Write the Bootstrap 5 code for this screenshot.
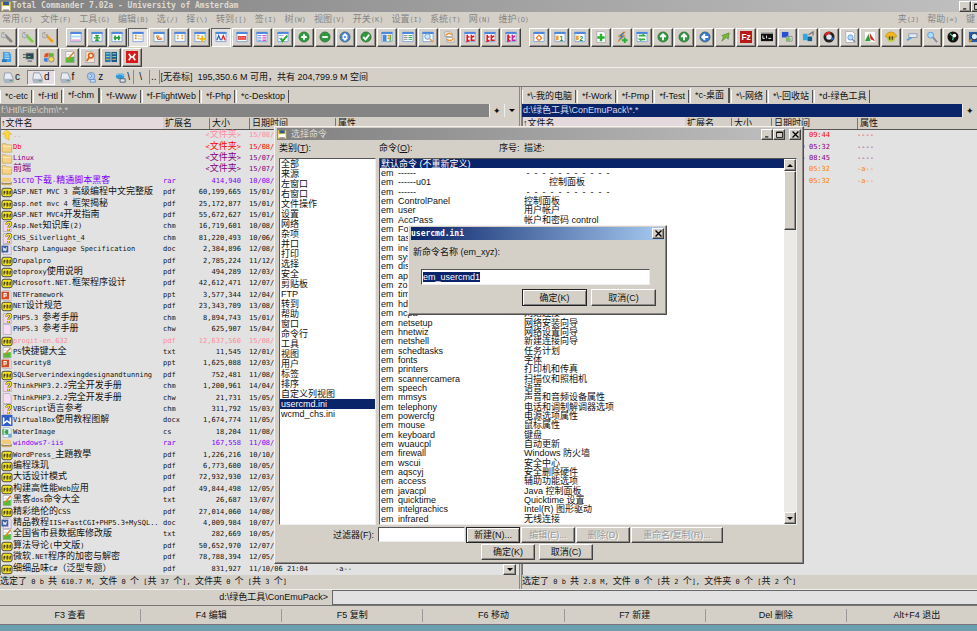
<!DOCTYPE html>
<html lang="zh-CN">
<head>
<meta charset="utf-8">
<meta name="viewport" content="width=device-width, initial-scale=1">
<title>Total Commander 7.02a - University of Amsterdam</title>
<link href="https://cdn.jsdelivr.net/npm/bootstrap@5.3.0/dist/css/bootstrap.min.css" rel="stylesheet">
<style>
:root{--face:#d4d0c8;--navy:#0a246a;--ui:"Liberation Sans","Noto Sans CJK SC",sans-serif;--fixed:"DejaVu Sans Mono","Noto Sans CJK SC",monospace}
body{background:#6b9fb0;font:9px/12px var(--ui);color:#111;overflow:hidden}
button,input{font:inherit;color:inherit}
svg{display:block}
.app{height:calc(100vh - 6px);background:var(--face);border-bottom:1px solid #777}
.fixed-text{font-family:var(--fixed);font-size:7px}
.han{font-size:9px}
.title-main{height:12px;background:linear-gradient(90deg,#808080,#c0c0c0);color:#dedad2;font:bold 8px/12px var(--fixed)}
.title-btns{flex:none;margin-right:-6px}
.menu-bar{height:15px;padding:0 2px;gap:8px;color:#858585;line-height:15px}
.menu-bar a{color:inherit;text-decoration:none}
.tool-clip{height:20px;overflow:hidden}
.tool-row{height:20px;margin:0 -8px 0 -3px}
.tool-row.short-row{width:146px}
.tool-gap{flex:0 0 7px}
.bevel{background:var(--face);border:1px solid;border-color:#fff #404040 #404040 #fff;box-shadow:inset -1px -1px #908d88;padding:0;border-radius:0}
.tool{flex:1 1 0;min-width:0;height:19px;margin-right:1px;display:flex;align-items:center;justify-content:center}
.tool.pressed{border-color:#606060 #fff #fff #606060;box-shadow:none;background:#e6e2e0}
.tool svg{width:12px;height:12px}
.drive-bar{height:20px;border-top:1px solid #f0eeea;border-bottom:1px solid #777;padding:0 2px}
.drive{height:15px;border:1px solid transparent;background:none;padding:0 2px 0 0;font-size:10px;gap:1px}
.drive svg{width:11px;height:11px}
.drive.pressed{border-color:#808080 #fff #fff #808080;background:#e6dfe2}
.v-rule{border-left:1px solid #888;height:14px}
.tab-strip{height:17px;padding-top:3px}
.tab-strip a{color:#111;text-decoration:none;padding:0 3px 0 4px;height:13px;line-height:13px;border-right:1px solid #555;border-left:1px solid #fff;margin-right:1px;white-space:nowrap}
.tab-strip a.on{height:15px;margin-top:-2px;line-height:14px;border-right-width:2px;padding-right:4px}
.left-pane{flex:0 0 522px;border-right:3px double #888}
.right-pane{min-width:0}
.path-bar{height:13px;line-height:12px;background:#848484;color:#d4d0c8;padding-left:1px;min-width:0}
.path-bar.live{background:var(--navy);color:#d8dcf0}
.mini{width:15px;height:13px;border:0;background:var(--face);padding:0;line-height:12px;border-left:1px solid #eee}
.list-area{background:#e2e2e2;min-height:0;border-left:1px solid #777;position:relative}
.files{table-layout:fixed;width:100%;height:100%;border-collapse:separate;border-spacing:0}
.files th{height:13px;background:var(--face);font:9px/11px var(--ui);border-bottom:1px solid #555;padding:0;white-space:nowrap}
.files th:first-child{background:#e4dade}
.files th span{display:block;border-left:1px solid #777;padding-left:2px}
.files th.size-head span{margin-left:18px}
.f-name{width:162px}.f-ext{width:28px}.f-size{width:58px}.f-date{width:86px}
.files td{padding:0;font-family:var(--fixed);font-size:7px;line-height:9px;height:9px;white-space:nowrap}
.files td .han{line-height:0}
.files .num{text-align:right;padding-right:8px}
.files .file-name{display:flex;align-items:center;height:9px}
.files .file-name svg{width:12px;height:11px;flex:none}
.files .c-pink{color:#ff8ba0}.files .c-red{color:#f00}.files .c-purple{color:#800080}.files .c-violet{color:#8000ff}.files .c-orange{color:#ff8000}
.corner-btn{position:absolute;right:3px;bottom:0;width:13px;height:11px}
.status{height:14px;line-height:12px;white-space:pre;overflow:hidden}
.cmd-line{height:17px;border-top:1px solid #f0f0f0;border-bottom:1px solid #777}
.cmd-line label{flex:0 0 328px;text-align:right;line-height:15px}
.cmd-line input{background:#e2e2e2;border:1px solid #666;border-right:0;height:15px;border-radius:0;min-width:0}
.key-row{height:18px;margin-right:-11px}
.key-row button{flex:1 1 0;border:0;border-right:1px solid #999;background:none;height:13px;padding:0;line-height:13px}
.win{position:absolute;background:var(--face);border:1px solid;border-color:#f4f2ee #505050 #505050 #f4f2ee;box-shadow:inset -1px -1px #8c8984;padding:1px 2px 2px}
.win-title{height:12px;line-height:12px}
.cmd-win{left:274px;top:126px;width:530px;height:438px}
.cmd-win .win-title{background:linear-gradient(90deg,#808080,#c0c0c0);color:#dedad2}
.ask-win{left:408px;top:225px;width:259px;height:90px}
.ask-win .win-title{background:linear-gradient(90deg,#0a246a,#a6caf0);color:#fff;height:13px;font:bold 8px/13px var(--fixed)}
.sys-btn{width:12px;height:11px;display:flex;align-items:center;justify-content:center}
.sys-btn svg{width:7px;height:7px}
.sunk{background:#fff;border:1px solid;border-color:#555 #eee #eee #555;border-radius:0}
.win-body{gap:3px;padding:0 4px 0 2px}
.cat-col{flex:0 0 97px}
.cat-list li{height:10px;line-height:10px;padding-left:1px}
.picked{background:var(--navy);color:#fff}
.labels{height:18px;line-height:17px}
.lab-a{flex:0 0 120px}.lab-b{flex:0 0 25px}
.cmds{table-layout:fixed;width:100%;height:100%;border-spacing:0}
.cmds td{padding:0 0 0 1px;line-height:8px;height:8px;white-space:pre}
.c-em{width:17px}.c-cmd{width:126px}
.scroll{flex:0 0 12px;background:#ebeae6}
.scroll button{height:12px;width:12px;display:flex;align-items:center;justify-content:center}
.scroll .thumb{height:59px;width:12px}
.arrow{width:0;height:0;border:3px solid transparent;border-top-color:#000;border-bottom:0}
.arrow.up{border-top:0;border-bottom:3px solid #000}
.push{height:16px;line-height:12px;width:54px;white-space:nowrap}
.push.wide{width:65px;height:17px}
.push.main{border-color:#222;box-shadow:inset 1px 1px #fff,inset -1px -1px #808080}
.push:disabled{color:#999;text-shadow:1px 1px #fff}
.filter-label{flex:0 0 97px;text-align:right}
.filter-row{height:18px;gap:1px;padding-top:1px}
.filter-box{width:87px;height:15px;margin-left:3px}
.rename{width:92px}
.done-row{height:18px;padding:1px 4px 0 0}
.ask-label{padding:6px 0 11px 2px}
.ask-field{margin:0 14px 0 10px;height:16px;border:1px solid;border-color:#555 #eee #eee #555;background:#fff;padding:0 1px;border-radius:0;line-height:14px}
.ask-field:focus{outline:0}
::selection{background:var(--navy);color:#fff}
</style>
</head>
<body>
<div class="app d-flex flex-column">
  <header class="title-main d-flex align-items-center justify-content-between overflow-hidden">
    <div class="d-flex align-items-center"><svg data-i="disk" width="12" height="11"></svg><span>Total Commander 7.02a - University of Amsterdam</span></div>
    <div class="d-flex title-btns"><button class="bevel sys-btn" aria-label="最小化"><svg data-i="min"></svg></button><button class="bevel sys-btn" aria-label="最大化"><svg data-i="max"></svg></button></div>
  </header>
  <nav class="menu-bar d-flex text-nowrap overflow-hidden" id="menu"></nav>
  <div class="tool-clip"><div class="tool-row d-flex align-items-center" id="tools"></div></div>
  <div class="tool-clip"><div class="tool-row short-row d-flex align-items-center" id="tools2"></div></div>
  <div class="drive-bar d-flex align-items-center">
    <button class="drive d-flex align-items-center"><svg data-i="drive"></svg>c</button>
    <button class="drive pressed d-flex align-items-center ms-1 px-1"><svg data-i="drive"></svg>d</button>
    <button class="drive d-flex align-items-center ms-1"><svg data-i="drive"></svg>f</button>
    <button class="drive d-flex align-items-center ms-2"><svg data-i="globe"></svg>z</button>
    <button class="drive d-flex align-items-center ms-2"><svg data-i="net"></svg>\</button>
    <span class="v-rule"></span><button class="drive ms-1">\</button><span class="v-rule ms-1"></span><button class="drive">..</button><span class="v-rule"></span>
    <span class="text-nowrap">[无卷标]&nbsp; 195,350.6 M 可用，共有 204,799.9 M 空间</span>
  </div>
  <main class="d-flex flex-fill overflow-hidden">
    <section class="left-pane d-flex flex-column">
      <nav class="tab-strip d-flex" id="tabsL"></nav>
      <div class="d-flex"><div class="path-bar flex-fill">f:\Htl\File\chm\*.*</div><button class="mini" aria-label="收藏夹">✦</button><button class="mini d-flex align-items-center justify-content-center" aria-label="历史"><span class="arrow"></span></button></div>
      <div class="list-area flex-fill"><table class="files" id="filesL"></table>
        <button class="bevel corner-btn d-flex align-items-center justify-content-center" aria-label="向下滚动"><span class="arrow"></span></button></div>
      <div class="status fixed-text" data-mix>选定了 0 b 共 610.7 M, 文件 0 个 [共 37 个], 文件夹 0 个 [共 3 个]</div>
    </section>
    <section class="right-pane d-flex flex-column flex-fill">
      <nav class="tab-strip d-flex" id="tabsR"></nav>
      <div class="d-flex"><div class="path-bar live flex-fill">d:\绿色工具\ConEmuPack\*.*</div><button class="mini" aria-label="收藏夹">✦</button></div>
      <div class="list-area flex-fill"><table class="files" id="filesR"></table></div>
      <div class="status fixed-text" data-mix>选定了 0 b 共 2.8 M, 文件 0 个 [共 2 个], 文件夹 0 个 [共 2 个]</div>
    </section>
  </main>
  <div class="cmd-line d-flex align-items-center"><label for="cmd">d:\绿色工具\ConEmuPack&gt;</label><input id="cmd" class="flex-fill ms-1" type="text"></div>
  <div class="overflow-hidden"><div class="key-row d-flex align-items-center">
    <button>F3 查看</button><button>F4 编辑</button><button>F5 复制</button><button>F6 移动</button><button>F7 新建</button><button>Del 删除</button><button>Alt+F4 退出</button>
  </div></div>
</div>

<section class="win cmd-win d-flex flex-column" role="dialog" aria-label="选择命令">
  <div class="win-title d-flex align-items-center justify-content-between">
    <div class="d-flex align-items-center"><svg data-i="disk" class="me-1" width="10" height="11"></svg>选择命令</div>
    <div class="d-flex"><button class="bevel sys-btn" aria-label="最小化"><svg data-i="min"></svg></button><button class="bevel sys-btn" aria-label="最大化"><svg data-i="max"></svg></button><button class="bevel sys-btn ms-1" aria-label="关闭"><svg data-i="close"></svg></button></div>
  </div>
  <div class="win-body d-flex flex-fill overflow-hidden">
    <div class="cat-col d-flex flex-column"><div class="labels">类别(<u>T</u>):</div><ul class="sunk cat-list list-unstyled flex-fill mb-0" id="cats"></ul></div>
    <div class="d-flex flex-column flex-fill">
      <div class="labels d-flex"><span class="lab-a">命令(<u>O</u>):</span><span class="lab-b">序号:</span><span>描述:</span></div>
      <div class="sunk d-flex flex-fill overflow-hidden"><div class="flex-fill"><table class="cmds" id="cmds"></table></div>
        <div class="scroll d-flex flex-column"><button class="bevel" aria-label="向上"><span class="arrow up"></span></button><div class="bevel thumb"></div><button class="bevel mt-auto" aria-label="向下"><span class="arrow"></span></button></div>
      </div>
    </div>
  </div>
  <div class="filter-row d-flex align-items-center">
    <label class="filter-label" for="flt">过滤器(F):</label><input id="flt" type="text" class="sunk filter-box">
    <button class="bevel push main">新建(N)...</button><button class="bevel push" disabled>编辑(E)...</button><button class="bevel push" disabled>删除(D)</button><button class="bevel push rename" disabled>重命名/复制(R)...</button>
  </div>
  <div class="d-flex justify-content-center gap-1 done-row"><button class="bevel push">确定(K)</button><button class="bevel push">取消(C)</button></div>
</section>

<section class="win ask-win d-flex flex-column" role="dialog" aria-label="usercmd.ini">
  <div class="win-title d-flex align-items-center justify-content-between"><span>usercmd.ini</span><button class="bevel sys-btn" aria-label="关闭"><svg data-i="close"></svg></button></div>
  <label class="ask-label" for="nm">新命令名称 (em_xyz):</label>
  <input id="nm" class="ask-field" type="text" value="em_usercmd1">
  <div class="d-flex justify-content-end gap-1 pt-1 pe-2"><button class="bevel push wide main">确定(K)</button><button class="bevel push wide">取消(C)</button></div>
</section>

<script src="https://cdn.jsdelivr.net/npm/bootstrap@5.3.0/dist/js/bootstrap.bundle.min.js"></script>
<script>
const win = inner => `<path fill="#fff" stroke="#7ea6dc" d="M1 1.5h11v10H1z"/><path fill="#4a86e0" d="M.5 1h12v2.200H.5z"/>${inner}`;
const wrench = c => `<path d="M5 5l6 6" stroke="${c}" stroke-width="3" stroke-linecap="round"/><path d="M3.500 1.500a3 3 0 1 0 2.500 2.500L4.500 5 2.500 3z" fill="#c8ccd0" stroke="#888" stroke-width=".6"/>`;
const ball = (c, d) => `<circle cx="6.500" cy="6.500" r="5.500" fill="${c}" stroke="#2b5a35" stroke-width=".7"/><path d="${d}" stroke="#fff" stroke-width="2" fill="none"/>`;
const page = (c, inner) => `<path d="M2 .5h7l2.500 2.500v9.500H2z" fill="${c}" stroke="#99a" stroke-width=".7"/>${inner}`;
const txt = (s, c, x = 3) => `<text x="${x}" y="10.500" font-size="7" font-weight="bold" font-family="Liberation Sans" fill="${c}">${s}</text>`;
const bi = c => `<path d="M3.500 4v7l2.500-1M3 6.500h3M8 4v6h3.500M8 7l3-1.500" stroke="${c}" stroke-width="1.800" fill="none"/>`;
const icons = {
  disk: '<path fill="#f0d040" d="M1 1h11v11H1z"/><path fill="#2c5a9c" d="M3 1h7v4H3z"/><path fill="#fff" d="M2 6h9v5H2z"/><path fill="#888" d="M3 10h7v2H3z"/>',
  min: '<path d="M2 11h6" stroke="#000" stroke-width="2"/>',
  max: '<path d="M1 2h11v10H1z" fill="none" stroke="#000" stroke-width="1.500"/><path d="M1 2.500h11" stroke="#000" stroke-width="2"/>',
  close: '<path d="M1 1l11 11M12 1L1 12" stroke="#000" stroke-width="2.500"/>',
  drive: '<path d="M2 1h7l3 7v4H2L1 8z" fill="#e8ecf2" stroke="#8a94a8"/><path d="M1 8h11v4H1z" fill="#aab4c6"/><path d="M8 10h3" stroke="#3a9a4a"/>',
  globe: '<circle cx="6" cy="5" r="4.500" fill="#a8c8ee" stroke="#6a90c8"/><path d="M4 2l3 2-2 3M5 9h6v3H5z" stroke="#5a88cc" fill="#d8e8fa"/>',
  net: '<ellipse cx="6" cy="5" rx="5" ry="3.500" fill="#2e9adc"/><path d="M2 4c3-3 6-2 8 1" stroke="#bfe6ff" fill="none"/><path d="M6 8h6v4H6z" fill="#dde6ee" stroke="#456"/>',
  wg: wrench('#8a8a8a'), wn: wrench('#78d040'), wo: wrench('#f0a020'),
  w1: win('<path fill="#a8e0f0" d="M2 5h9v2H2z"/><path fill="#f0b0d8" d="M2 9h9v2H2z"/>'),
  w2: win('<path d="M6.500 4v7M3 7.500h7M4.500 5h4M4.500 10h4" stroke="#20a030" stroke-width="1.500"/>'),
  w3: win('<path d="M3 7.500h7M4.500 5v5M8.500 5v5" stroke="#20a030" stroke-width="1.800"/>'),
  w4: win('<path d="M3 5h2M3 8h2" stroke="#e08820" stroke-width="2"/><path d="M6 5.500h5M6 8.500h5" stroke="#d0b080"/>'),
  w5: win('<path d="M3 4.500h4v3H3zM7 7h3v3H7z" fill="#e6a868"/><path d="M5 7v2h3" stroke="#c03820" fill="none"/>'),
  w6: win('<path d="M3 5h2M8 5h2M3 8h2M8 8h2" stroke="#e8a040" stroke-width="2"/>'),
  w7: win('<path d="M3 5h3M3 8h3" stroke="#e8a040" stroke-width="2"/><path d="M9 5v7M6 8.500h6" stroke="#f0b800" stroke-width="2"/>'),
  w8: win('<path d="M2 10l2-5 2 5" stroke="#2060d0" fill="none" stroke-width="1.400"/><path d="M7 10l2-5 2 5" stroke="#e02020" fill="none" stroke-width="1.400"/>'),
  w9: win('<path d="M2 5.500h9v4H2z" fill="#e83030"/><path d="M3 7.500h7" stroke="#fff" stroke-dasharray="1 1"/>'),
  w10: win('<path d="M2 5h4M2 7.500h4M2 10h4" stroke="#4080e8"/><path d="M7 5h4M7 7.500h4M7 10h4" stroke="#e050b0" stroke-width="1.500"/>'),
  w11: win('<path d="M2 5h5M2 8h4" stroke="#80a8e8"/><path d="M4 8l2 3 5-6" stroke="#20a828" fill="none" stroke-width="2"/>'),
  plus: ball('#2f9a3c', 'M6.500 3.500v6M3.500 6.500h6'), minus: ball('#2f9a3c', 'M3.500 6.500h6'), recyc: ball('#4a86dc', 'M4 6l2.500-2.500L9 6M9 7L6.500 9.500 4 7'), ok: ball('#2f9a3c', 'M3.500 6.500L6 9l4-5'),
  up: ball('#2f9a3c', 'M6.500 10V4M3.500 6.500l3-3 3 3'), back: ball('#3c78dc', 'M10 6.500H4M6.500 3.500l-3 3 3 3'),
  c1: win('<path d="M2 4h4v7H2z" fill="#4088e0"/><path d="M7 5h2M7 8h2" stroke="#e09020" stroke-width="2"/><path d="M10 4v7" stroke="#50b040" stroke-width="1.500"/>'),
  c2: win('<path d="M2 5h4M2 7h4M2 9h4" stroke="#888"/><path d="M7 5h4M7 7h4M7 9h4" stroke="#30a040"/>'),
  find: win('<circle cx="6" cy="6" r="3" fill="#cfe6fa" stroke="#6a98d0"/><path d="M8.500 8.500L12 12" stroke="#e0a060" stroke-width="2"/>'),
  swap: '<path d="M2 1h6l2 2v3H2zM4 7h6l2 2v3H4z" fill="#fff" stroke="#999" stroke-width=".8"/><path d="M3 5c1-3 5-3 7-1M11 8c-1 3-5 3-7 1" stroke="#f09030" stroke-width="1.600" fill="none"/>',
  b1: win(bi('#e01818')), b2: win(bi('#e01818')), b3: win(bi('#c020a0') + '<path d="M3.500 4v7" stroke="#e01818" stroke-width="2"/>'),
  dia: win('<path d="M6.500 4.500l3 3-3 3-3-3z" fill="none" stroke="#f08020" stroke-width="1.400"/>'),
  n1: win('<path d="M2 5h3v5H2z" fill="#f0a040"/>' + txt('1', '#208020', 6)), n2: win('<path d="M2 5h3v5H2z" fill="#f0a040"/>' + txt('2', '#208020', 6)),
  add: page('#fff', '<path d="M6.500 3v8M2.500 7h8" stroke="#28b030" stroke-width="2.600"/>'),
  bolt: '<path d="M8 1L2 6h3l-3 6 8-7H7l3-4z" fill="#3c80d8" stroke="#e89030" stroke-width=".8"/><path d="M9.500 7v6M6.500 10h6" stroke="#28b030" stroke-width="2"/>',
  gw: win('<path d="M3 5h6l-2-1.500M10 9H4l2 1.500" stroke="#30b040" stroke-width="1.800" fill="none"/>'),
  garr: '<path d="M3 11l2-5-2-1 8-3-1 7-2-2z" fill="#78b838" stroke="#4a8020" stroke-width=".6"/>',
  fz: '<path fill="#b81818" d="M0 0h13v13H0z"/><text x="1.500" y="10" font-size="9" font-weight="bold" font-family="Liberation Sans" fill="#fff">Fz</text>',
  term: '<path fill="#111" d="M0 2h13v9H0z"/><path fill="#aaa" d="M0 1.500h13V3H0z"/><path d="M2 5v3h2M6 5v3M8 8h3" stroke="#fff" fill="none"/>',
  mon: '<path d="M1 1h7v6H1z" fill="#2850d0"/><path d="M6 6h6v5H6z" fill="#e8eef8" stroke="#889"/><circle cx="8" cy="9" r="2.500" fill="#80c060"/>',
  cube: '<path d="M1 3h5v7H1z" fill="#30a8e0"/><path d="M6 6h5v5H6z" fill="#186090"/><path d="M7 4l5-3v4" stroke="#777" fill="none" stroke-width="1.400"/>',
  ring: '<circle cx="6.500" cy="6.500" r="4.500" fill="#dde4f0" stroke="#222" stroke-width="3"/><path d="M2.500 5A4.500 4.500 0 0 1 8 2.200" stroke="#e02820" stroke-width="2.600" fill="none"/><path d="M11 7a4.500 4.500 0 0 1-2 3" stroke="#3060c0" stroke-width="2" fill="none"/>',
  docf: page('#fff', '<circle cx="7" cy="7" r="2.800" fill="#b8dcf8" stroke="#5a98d8"/><path d="M9 9l3 3" stroke="#789" stroke-width="1.500"/>'),
  tri: '<path fill="#fff" d="M1 1h11v11H1z"/><path d="M5 3L1 11h6z" fill="#28a038"/><path d="M6 2l6 9-5-2z" fill="#e02020"/>',
  helm: '<circle cx="6.500" cy="7.500" r="4.500" fill="#b8d040"/><path d="M.5 6.500a6 5.500 0 0 1 12 0z" fill="#f0b820" stroke="#c08010" stroke-width=".6"/><path d="M5 6v3.500M8 6v3.500" stroke="#604010" stroke-width="1.600"/>',
  key: '<path d="M3 3h9v4H3z" fill="#e4ecf4" stroke="#8a9aac"/><path d="M6 7l-5 3" stroke="#58a0d8" stroke-width="2"/>',
  mag: '<circle cx="5" cy="4.500" r="3.200" fill="#b0dcfa" stroke="#5a9ae0"/><path d="M7.500 7l4.500 5" stroke="#889" stroke-width="2"/>',
  disc: '<circle cx="6.500" cy="6.500" r="6" fill="#111"/><path d="M3 3l4 3-1 4" stroke="#50c080" fill="none" stroke-width="1.500"/><circle cx="8" cy="5" r="2" fill="#fff"/>',
  srch: '<path d="M1 1h10v11H1z" fill="#2060b0"/><circle cx="7" cy="6" r="3.500" fill="#d8ecfa" stroke="#222"/><path d="M4 9l-3 3" stroke="#e09020" stroke-width="2"/>',
  cyl: '<path d="M2 1h7l2 3v8H2z" fill="#48a0e0"/><path d="M4 3h4M4 5.500h5M4 8h5" stroke="#c8e8fa"/><path d="M1 9h5v3H1z" fill="#2878c0"/>',
  pc: '<path d="M4 2h9v7H4z" fill="#345" stroke="#bbb"/><path d="M6 10h5v2H6z" fill="#889"/><path d="M1 4h3M1 7h3" stroke="#444"/><path d="M6 6h3" stroke="#5d6"/>',
  flag: '<path d="M2 3l4-1v4L1 7z" fill="#e84820"/><path d="M7 2l5 1-1 4-5-1z" fill="#60b838"/><path d="M1 8l4-1v5l-4-1z" fill="#3a80e0"/><circle cx="9" cy="9" r="3" fill="#f8d850" stroke="#888"/>',
  note: page('#fff', '<path d="M2 7l9-1v6.500H2z" fill="#58b838"/><path d="M4 9l7-8" stroke="#d88830" stroke-width="1.800"/><path d="M3 4h4" stroke="#ccc"/>'),
  pdoc: page('#f4e4d0', '<circle cx="7.500" cy="5" r="2.600" fill="none" stroke="#d86018" stroke-width="1.600"/><path d="M5.500 7L3 11" stroke="#d86018" stroke-width="1.800"/>'),
  srv: '<path d="M0 1h6v11H0z" fill="#2878b8"/><path d="M7 1h6v11H7z" fill="#1c5888"/><path d="M1 3h4M8 3h4M1 6h4M8 6h4" stroke="#90e0b0"/><path d="M1 9h4M8 9h4" stroke="#f0c040"/>',
  xred: '<path d="M0 0h13v13H0z" fill="#d81818"/><path d="M3 3l2.500 3.500L3 10M10 3L7.500 6.500 10 10M4 6.500h5" stroke="#fff" stroke-width="1.800" fill="none"/>',
  fup: '<path d="M6 0L1 5h3v4l5 3V5h3z" fill="#ffd83a" stroke="#d8a820" stroke-width=".6"/>',
  fold: '<path d="M1 2h4l1 1.500h6V12H1z" fill="#f6d484" stroke="#c89c48" stroke-width=".8"/><path d="M1 5h11" stroke="#fff0c0"/>',
  rar: '<path d="M0 2h11l1 9H1z" fill="#f0cc78"/><path d="M0 7h12v3H0z" fill="#a08860"/><path d="M1 7.500h10" stroke="#fff"/>',
  pdf: '<rect x=".5" y="1.500" width="12" height="10" rx="2.500" fill="#f0e020" stroke="#333"/><path d="M3 9V5h1v2H3M6.500 4.500V9M6.500 5h1v3.500M10 9V5h1.500M10 7h1" stroke="#222" fill="none"/>',
  chm: page('#f4d4f0', '<path d="M6 4c0-4 6-3 5 0-.5 1.500-2.500 1.500-2.500 4M8.500 9.500v2" stroke="#333" stroke-width="2.800" fill="none"/><path d="M6 4c0-4 6-3 5 0-.5 1.500-2.500 1.500-2.500 4M8.500 9.500v2" stroke="#f4e820" stroke-width="1.800" fill="none"/>'),
  chw: page('#f6dcf4', ''),
  doc: page('#eee0f4', '<path d="M0 2h8v8H0z" fill="#3c5ca0"/><path d="M2 4l1 4 1-3 1 3 1-4" stroke="#fff" fill="none"/>'),
  docx: '<path fill="#2c5cc8" d="M0 0h13v13H0z"/><path d="M2.500 3v7l4-3 4 3V3" stroke="#fff" stroke-width="1.800" fill="none"/>',
  ppt: page('#f6e8ea', '<path d="M0 2h9v9H0z" fill="#d84820"/><path d="M3 9V4h2.500v3H3" stroke="#fff" fill="none" stroke-width="1.200"/>'),
  cs: page('#e8f4fa', '<path d="M1 3h7v6H1z" fill="#38a050"/><path d="M5 4H3v4h2" stroke="#fff" fill="none"/><path d="M8 8h4v4H8z" fill="#70a8d8"/>')
};
const svg = n => `<svg viewBox="0 0 13 13" aria-hidden="true">${icons[n]}</svg>`;
const mix = s => s.replace(/</g, '&lt;').replace(/[^\x00-\x7f]+/g, '<span class="han">$&</span>');
const $ = id => document.getElementById(id);
document.querySelectorAll('svg[data-i]').forEach(e => { e.setAttribute('viewBox', '0 0 13 13'); e.innerHTML = icons[e.dataset.i]; });
document.querySelectorAll('[data-mix]').forEach(e => e.innerHTML = mix(e.textContent));

$('menu').innerHTML = '常用(C) 文件(F) 工具(G) 编辑(B) 选(/) 择(\\) 转到([) 签(I) 树(W) 视图(V) 开关(K) 设置(I) 系统(T) 网(N) 维护(O) 夹(J) 帮助(=) 键'
  .split(' ').map(t => `<a href="#" class="fixed-text${t[0] === '夹' ? ' ms-auto' : ''}">${mix(t)}</a>`).join('');
const tool = n => n === '|' ? '<span class="tool-gap"></span>' : `<button class="bevel tool${n.endsWith('!') ? ' pressed' : ''}" aria-label="${n}">${svg(n.replace('!', ''))}</button>`;
$('tools').innerHTML = 'wg wn wo | w1 w2 w3 w4! w5 w6 w7 w8! w9 w10 w11 plus minus recyc ok c1 c2 find swap b1 b2 b3 | dia n1 n2 add bolt gw up up back garr fz term mon cube ring docf tri helm key mag disc srch'.split(' ').map(tool).join('');
$('tools2').innerHTML = 'cyl pc flag note pdoc srv xred'.split(' ').map(tool).join('');
const tabs = (id, list, on) => $(id).innerHTML = list.map(t => `<a href="#" class="${t === on ? 'on' : ''}">${t}</a>`).join('');
tabs('tabsL', ['*c-etc', '*f-Htl', '*f-chm', '*f-Www', '*f-FlightWeb', '*f-Php', '*c-Desktop'], '*f-chm');
tabs('tabsR', ['*\\-我的电脑', '*f-Work', '*f-Pmp', '*f-Test', '*c-桌面', '*\\-网络', '*\\-回收站', '*d-绿色工具'], '*c-桌面');

const head = '<colgroup><col class="f-name"><col class="f-ext"><col class="f-size"><col class="f-date"><col></colgroup><thead><tr><th>↑文件名</th><th><span class="border-0">扩展名</span></th><th class="size-head"><span>大小</span></th><th><span>日期时间</span></th><th><span>属性</span></th></tr></thead>';
const LINES = 39;
const table = (id, rows) => {
  while (rows.length < LINES) rows.push(['', '', '', '', '', '', '']);
  $(id).innerHTML = head + '<tbody>' + rows.map(([i, n, e, s, d, c, a]) =>
    `<tr class="${c ? 'c-' + c : ''}"><td><div class="file-name">${i ? svg(i) : ''}<span>${mix(n)}</span></div></td><td>${e}</td><td class="num">${mix(s)}</td><td>${d}</td><td>${a || ''}</td></tr>`).join('') + '</tbody>';
};
table('filesL', `fup|..||<文件夹>|15/08/|pink
fold|Db||<文件夹>|15/08/|red
fold|Linux||<文件夹>|15/07/|purple
fold|前端||<文件夹>|15/07/|purple
rar|51CTO下载-精通脚本黑客|rar|414,940|10/08/|violet
pdf|ASP.NET MVC 3 高级编程中文完整版|pdf|60,199,665|15/01/
pdf|asp.net mvc 4 框架揭秘|pdf|25,172,877|15/01/
pdf|ASP.NET MVC4开发指南|pdf|55,672,627|15/01/
chm|Asp.Net知识库(2)|chm|16,719,601|10/08/
chm|CHS_Silverlight_4|chm|81,220,493|10/06/
doc|CSharp Language Specification|doc|2,384,896|12/08/
pdf|Drupalpro|pdf|2,785,224|11/12/
pdf|etoproxy使用说明|pdf|494,289|12/03/
pdf|Microsoft.NET.框架程序设计|pdf|42,612,471|12/07/
ppt|NETFramework|ppt|3,577,344|12/04/
pdf|NET设计规范|pdf|23,343,709|13/08/
chm|PHP5.3 参考手册|chm|8,894,743|15/01/
chw|PHP5.3 参考手册|chw|625,907|15/04/
pdf|progit-en.632|pdf|12,637,560|15/08/|pink
note|PS快捷键大全|txt|11,545|12/01/
ppt|security8|ppt|1,625,088|12/03/
pdf|SQLServerindexingdesignandtunning|pdf|752,481|11/08/
chm|ThinkPHP3.2.2完全开发手册|chm|1,200,961|14/04/
chw|ThinkPHP3.2.2完全开发手册|chw|21,731|15/05/
chm|VBScript语言参考|chm|311,792|15/03/
docx|VirtualBox使用教程图解|docx|1,674,774|11/05/
cs|WaterImage|cs|18,204|11/08/
rar|windows7-iis|rar|167,558|11/08/|violet
pdf|WordPress_主題教學|pdf|1,226,216|10/10/
pdf|编程珠玑|pdf|6,773,600|10/05/
pdf|大话设计模式|pdf|72,932,930|12/03/
pdf|构建高性能Web应用|pdf|49,844,498|12/05/
note|黑客dos命令大全|txt|26,687|13/07/
pdf|精彩绝伦的CSS|pdf|27,014,060|14/08/
doc|精品教程IIS+FastCGI+PHP5.3+MySQL..|doc|4,009,984|10/07/
note|全国省市县数据库修改版|txt|282,669|10/05/
pdf|算法导论(中文版)|pdf|50,652,970|12/07/
pdf|微软.NET程序的加密与解密|pdf|78,788,394|12/05/
pdf|细细品味C#（泛型专题）|pdf|831,927|11/10/06 21:04||-a--`.split('\n').map(r => r.split('|')));
table('filesR', [['', '', '', '', '15/08/12 09:44', 'red', '----'], ['', '', '', '', '15/08/09 05:32', 'purple', '----'], ['', '', '', '', '15/08/05 08:45', 'purple', '----'], ['', '', '', '', '15/08/09 05:32', 'orange', '-a--'], ['', '', '', '', '15/08/09 05:32', 'orange', '-a--']]);

$('cats').innerHTML = '全部 来源 左窗口 右窗口 文件操作 设置 网络 杂项 并口 打印 选择 安全 剪贴板 FTP 转到 帮助 窗口 命令行 工具 视图 用户 标签 排序 自定义列视图 usercmd.ini wcmd_chs.ini'
  .split(' ').map(t => `<li class="${t === 'usercmd.ini' ? 'picked' : ''}">${t}</li>`).join('');
const dash = ' -  -  -  -  -  -  -  -  -  -  -';
const cmds = `------|${dash}
------u01|          控制面板
------|${dash}
ControlPanel|控制面板
user|用户帐户
AccPass|帐户和密码 control
Fo|
tas|
ine|
sys|
dis|
ap|
zo|
tim|
hd|
ncpa|网络连接
netsetup|网络安装向导
hnetwiz|网络设置向导
netshell|新建连接向导
schedtasks|任务计划
fonts|字体
printers|打印机和传真
scannercamera|扫描仪和照相机
speech|语音
mmsys|声音和音频设备属性
telephony|电话和调制解调器选项
powercfg|电源选项属性
mouse|鼠标属性
keyboard|键盘
wuaucpl|自动更新
firewall|Windows 防火墙
wscui|安全中心
aqscyj|安全删除硬件
access|辅助功能选项
javacpl|Java 控制面板
quicktime|Quicktime 设置
intelgrachics|Intel(R) 图形驱动
infrared|无线连接`.split('\n').map(r => r.split('|'));
$('cmds').innerHTML = '<colgroup><col class="c-em"><col class="c-cmd"><col></colgroup><tr class="picked"><td colspan="3">默认命令 (不重新定义)</td></tr>' +
  cmds.map(([n, d]) => `<tr><td>em</td><td>${n}</td><td>${d}</td></tr>`).join('');
$('nm').focus(); $('nm').select();
</script>
</body>
</html>
